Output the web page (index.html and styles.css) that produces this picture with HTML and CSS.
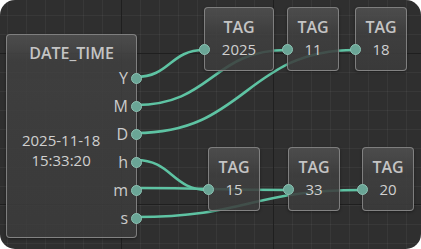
FILE: index.html
```html
<!DOCTYPE html>
<html lang="en">
<head>
  <meta charset="UTF-8">
  <title>Node Graph</title>
  <link rel="stylesheet" href="styles.css">
</head>
<body>
  <div class="canvas">
    <svg class="wires" width="421" height="249" viewBox="0 0 421 249">
      <path d="M136 77 C170 77 170 50 204 50" />
      <path d="M136 105 C212 105 212 50 287 50" />
      <path d="M136 133 C246 133 246 50 355 50" />
      <path d="M136 160 C172 160 172 190 208 190" />
      <path d="M136 188 C212 188 212 190 288 190" />
      <path d="M136 217 C249 217 249 190 362 190" />
    </svg>

    <div class="node date-node">
      <div class="node-title">DATE_TIME</div>
      <div class="node-body">
        <div class="date-value">2025-11-18<br>15:33:20</div>
        <div class="outputs">
          <div class="out">Y<span class="port"></span></div>
          <div class="out">M<span class="port"></span></div>
          <div class="out">D<span class="port"></span></div>
          <div class="out">h<span class="port"></span></div>
          <div class="out">m<span class="port"></span></div>
          <div class="out">s<span class="port"></span></div>
        </div>
      </div>
    </div>

    <div class="node tag wide" style="left:204px; top:7px"><div class="node-title">TAG</div><div class="tag-value"><span class="port"></span>2025</div></div>
    <div class="node tag" style="left:287px; top:7px"><div class="node-title">TAG</div><div class="tag-value"><span class="port"></span>11</div></div>
    <div class="node tag" style="left:355px; top:7px"><div class="node-title">TAG</div><div class="tag-value"><span class="port"></span>18</div></div>
    <div class="node tag" style="left:208px; top:147px"><div class="node-title">TAG</div><div class="tag-value"><span class="port"></span>15</div></div>
    <div class="node tag" style="left:288px; top:147px"><div class="node-title">TAG</div><div class="tag-value"><span class="port"></span>33</div></div>
    <div class="node tag" style="left:362px; top:147px"><div class="node-title">TAG</div><div class="tag-value"><span class="port"></span>20</div></div>
  </div>
</body>
</html>
```

FILE: styles.css
```css
body {
  margin: 0;
  background: #fff;
  font-family: "Open Sans", "Noto Sans", sans-serif;
}
.canvas {
  position: relative;
  width: 421px;
  height: 249px;
  border-radius: 15px;
  overflow: hidden;
  background-color: #2f2f2f;
  background-image:
    linear-gradient(90deg, #1f1f1f 1px, transparent 1px),
    linear-gradient(0deg, #1f1f1f 1px, transparent 1px),
    linear-gradient(90deg, rgba(255,255,255,0.045) 1px, transparent 1px),
    linear-gradient(0deg, rgba(255,255,255,0.045) 1px, transparent 1px);
  background-size: 152px 152px, 152px 151px, 19px 19px, 19px 19px;
  background-position: 121px 0, 0 54px, 7px 0, 0 16px;
}
.wires {
  position: absolute;
  left: 0;
  top: 0;
}
.wires path {
  fill: none;
  stroke: #5ec3a3;
  stroke-width: 2.6;
}
.node {
  position: absolute;
  box-sizing: border-box;
  border: 1px solid rgba(150,150,150,0.75);
  border-radius: 4px;
  background: linear-gradient(180deg, rgba(80,80,80,0.9) 0px, rgba(64,64,64,0.88) 26px, rgba(60,60,60,0.86) 100%);
  box-shadow: 0 1px 3px rgba(0,0,0,0.4);
  color: #cfcfcf;
}
.node-title {
  font-weight: 600;
  font-size: 16px;
  color: #c4c4c4;
  text-align: center;
}
.port {
  position: absolute;
  width: 9px;
  height: 9px;
  border-radius: 50%;
  background: #6aa596;
  border: 1px solid #8cc3b4;
}
.date-node {
  left: 6px;
  top: 34px;
  width: 131px;
  height: 204px;
}
.date-node .node-title {
  padding-top: 8px;
  height: 21px;
  line-height: 21px;
}
.node-body {
  display: grid;
  grid-template-columns: 1fr auto;
  align-items: center;
}
.date-value {
  font-size: 15px;
  line-height: 20px;
  text-align: center;
  padding-left: 2px;
  padding-top: 3px;
  color: #d0d0d0;
}
.outputs {
  display: flex;
  flex-direction: column;
}
.out {
  position: relative;
  height: 28px;
  line-height: 28px;
  font-size: 16px;
  text-align: right;
  padding-right: 8px;
  color: #cbcbcb;
}
.out .port {
  right: -6px;
  top: 9px;
}
.tag {
  width: 52px;
  height: 64px;
}
.tag.wide {
  width: 70px;
}
.tag .node-title {
  padding-top: 9px;
  height: 21px;
  line-height: 21px;
}
.tag-value {
  position: relative;
  text-align: center;
  font-size: 15px;
  line-height: 22px;
  color: #d0d0d0;
}
.tag-value .port {
  left: -6px;
  top: 6px;
}
```
